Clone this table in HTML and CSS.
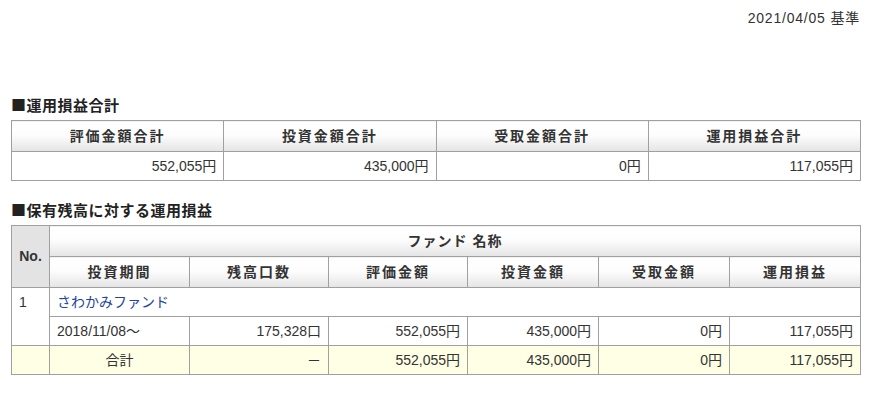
FILE: index.html
```html
<!DOCTYPE html>
<html lang="ja">
<head>
<meta charset="utf-8">
<link rel="stylesheet" href="styles.css">
</head>
<body>
<div class="page">
  <div class="date">2021/04/05 基準</div>

  <h2 class="section-title">■運用損益合計</h2>
  <table class="grid summary">
    <colgroup><col class="c4"><col class="c4"><col class="c4"><col class="c4"></colgroup>
    <tr>
      <th>評価金額合計</th>
      <th>投資金額合計</th>
      <th>受取金額合計</th>
      <th>運用損益合計</th>
    </tr>
    <tr>
      <td class="num">552,055円</td>
      <td class="num">435,000円</td>
      <td class="num">0円</td>
      <td class="num">117,055円</td>
    </tr>
  </table>

  <h2 class="section-title second">■保有残高に対する運用損益</h2>
  <table class="grid detail">
    <colgroup>
      <col class="c-no"><col class="c-a"><col class="c-b"><col class="c-b"><col class="c-c"><col class="c-c"><col class="c-c">
    </colgroup>
    <tr>
      <th class="no" rowspan="2">No.</th>
      <th class="fundhead" colspan="6">ファンド 名称</th>
    </tr>
    <tr>
      <th>投資期間</th>
      <th>残高口数</th>
      <th>評価金額</th>
      <th>投資金額</th>
      <th>受取金額</th>
      <th>運用損益</th>
    </tr>
    <tr>
      <td class="idx" rowspan="2">1</td>
      <td colspan="6"><a class="fund" href="#">さわかみファンド</a></td>
    </tr>
    <tr>
      <td>2018/11/08～</td>
      <td class="num">175,328口</td>
      <td class="num">552,055円</td>
      <td class="num">435,000円</td>
      <td class="num">0円</td>
      <td class="num">117,055円</td>
    </tr>
    <tr class="total">
      <td></td>
      <td class="center">合計</td>
      <td class="num">－</td>
      <td class="num">552,055円</td>
      <td class="num">435,000円</td>
      <td class="num">0円</td>
      <td class="num">117,055円</td>
    </tr>
  </table>
</div>
</body>
</html>
```

FILE: styles.css
```css
html, body {
  margin: 0;
  padding: 0;
  background: #fff;
}
body {
  font-family: "Liberation Sans", "Noto Sans CJK JP", sans-serif;
  font-size: 14px;
  color: #333;
}
.page {
  padding: 10px 16px 0 11px;
}
.date {
  text-align: right;
  font-size: 14px;
  line-height: 17px;
  letter-spacing: 0.8px;
  color: #333;
}
.section-title {
  margin: 68px 0 5px 0;
  font-family: "Noto Sans CJK JP", sans-serif;
  font-size: 15px;
  line-height: 20px;
  font-weight: bold;
  color: #222;
  letter-spacing: 0.5px;
}
.section-title.second {
  margin-top: 19px;
}
.grid {
  width: 850px;
  border-collapse: collapse;
  table-layout: fixed;
}
.grid th,
.grid td {
  border: 1px solid #a0a0a0;
  padding: 0 7px;
  line-height: 17px;
}
.grid th {
  height: 30px;
  font-size: 14px;
  font-weight: bold;
  letter-spacing: 2px;
  color: #333;
  text-align: center;
  background: linear-gradient(#ffffff 0%, #fdfdfd 45%, #e4e4e4 100%);
}
.grid th.fundhead {
  letter-spacing: 1px;
}
.grid th.no {
  background: #e3e3e3;
  letter-spacing: 0;
}
.grid td {
  height: 28px;
  text-align: left;
}
.grid td.num {
  text-align: right;
}
.grid td.center {
  text-align: center;
}
.grid td.idx {
  vertical-align: top;
  padding-top: 6px;
}
.c4 { width: 25%; }
.c-no { width: 38px; }
.c-a { width: 140px; }
.c-b { width: 139px; }
.c-c { width: 131px; }
.fund {
  color: #1e449c;
  text-decoration: none;
}
.total td {
  background: #ffffe6;
}
```
